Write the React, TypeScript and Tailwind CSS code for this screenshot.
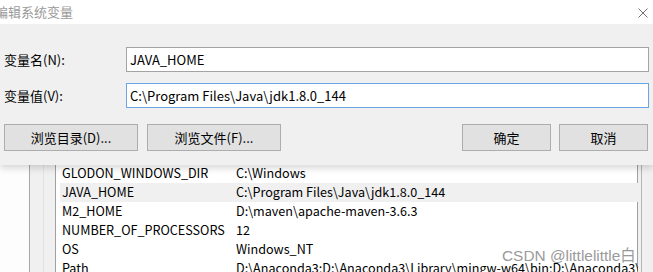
import React from "react";

const font = { fontFamily: '"Noto Sans CJK SC", "Noto Sans", sans-serif' };

const rows = [
  { name: "GLODON_WINDOWS_DIR", value: "C:\\Windows" },
  { name: "JAVA_HOME", value: "C:\\Program Files\\Java\\jdk1.8.0_144", selected: true },
  { name: "M2_HOME", value: "D:\\maven\\apache-maven-3.6.3" },
  { name: "NUMBER_OF_PROCESSORS", value: "12" },
  { name: "OS", value: "Windows_NT" },
  { name: "Path", value: "D:\\Anaconda3;D:\\Anaconda3\\Library\\mingw-w64\\bin;D:\\Anaconda3\\Library" },
];

function Btn({ label, className = "" }: { label: string; className?: string }) {
  return (
    <button
      type="button"
      className={`h-[27px] border border-[#adadad] bg-[#e1e1e1] text-[13px] text-black ${className}`}
    >
      {label}
    </button>
  );
}

export default function App() {
  return (
    <div className="h-[272px] w-[653px] overflow-hidden bg-white" style={font}>
      {/* dialog */}
      <div className="relative z-10 flex h-[165px] flex-col bg-[#f0f0f0] shadow-[0_3px_7px_rgba(0,0,0,0.16)]">
        <div className="flex h-[24px] items-center justify-between bg-white pr-[5px]">
          <span className="-ml-[5px] text-[13px] text-[#9a9a9a]">编辑系统变量</span>
          <svg width="10" height="10" viewBox="0 0 10 10" className="mt-[1px]">
            <path d="M0.5 0.5 L9.5 9.5 M9.5 0.5 L0.5 9.5" stroke="#707070" strokeWidth="1" />
          </svg>
        </div>
        <div className="flex flex-col pl-[4px] pr-[4px] pt-[23px]">
          <div className="flex h-[25px] items-center">
            <span className="w-[122px] text-[13px] text-black">变量名(N):</span>
            <div className="flex h-[25px] flex-1 items-center border border-[#a3a3a3] bg-white pl-[3px] text-[13px] text-black">
              JAVA_HOME
            </div>
          </div>
          <div className="mt-[11px] flex h-[25px] items-center">
            <span className="w-[122px] text-[13px] text-black">变量值(V):</span>
            <div className="flex h-[25px] flex-1 items-center border border-[#6aa6e3] bg-white pl-[3px] text-[13px] text-black">
              C:\Program Files\Java\jdk1.8.0_144
            </div>
          </div>
          <div className="mt-[16px] flex items-center pr-[1px]">
            <Btn label="浏览目录(D)..." className="w-[134px]" />
            <Btn label="浏览文件(F)..." className="ml-[9px] w-[134px]" />
            <div className="flex-1" />
            <Btn label="确定" className="w-[89px]" />
            <Btn label="取消" className="ml-[8px] w-[89px]" />
          </div>
        </div>
      </div>

      {/* window behind */}
      <div className="relative flex h-[107px]">
        <div className="w-[30px] border-r border-[#a8a8a8] bg-[#fdfdfd]" />
        <div className="flex w-[25px] bg-[#f0f0f0]">
          <div className="w-[14px] border-r border-[#e2e2e2]" />
        </div>
        <div className="flex w-[583px] border-x border-[#a0a0a0] bg-white">
          <div className="-mt-[1px] flex-1 pl-[4px]">
            {rows.map((r) => (
              <div
                key={r.name}
                className={`flex h-[19px] items-center pl-[2px] text-[12.6px] text-black ${r.selected ? "bg-[#f0f0f0]" : ""}`}
              >
                <span className="w-[174px] shrink-0">{r.name}</span>
                <span className="whitespace-nowrap">{r.value}</span>
              </div>
            ))}
          </div>
          <div className="w-[16px] bg-[#f0f0f0] pt-[7px]">
            <div className="mx-auto h-[29px] w-[14px] bg-[#cdcdcd]" />
          </div>
        </div>
        <div className="flex flex-1 bg-[#f0f0f0]">
          <div className="w-[4px] border-r border-[#b5b5b5]" />
        </div>
        <span
          className="absolute left-[502px] top-[83px] text-[15.4px] leading-none text-[#9a9a9a]"
          style={{ fontFamily: '"Liberation Sans", "Noto Sans CJK SC", sans-serif' }}
        >
          CSDN @littlelittle白
        </span>
      </div>
    </div>
  );
}
